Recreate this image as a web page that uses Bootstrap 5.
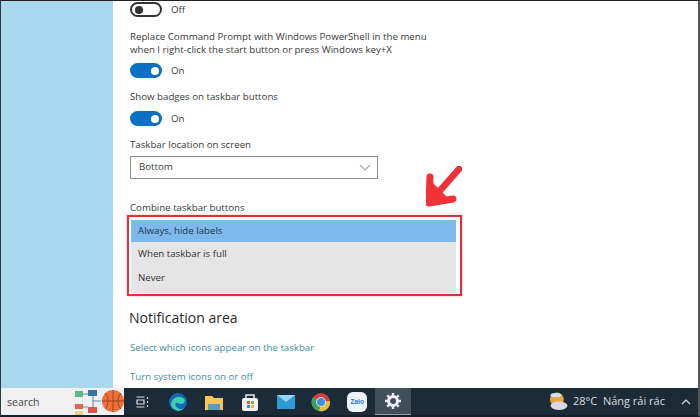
<!DOCTYPE html>
<html lang="en"><head><meta charset="utf-8"><title>Taskbar settings</title>
<link href="https://cdn.jsdelivr.net/npm/bootstrap@5.3.0/dist/css/bootstrap.min.css" rel="stylesheet">
<style>
html,body{margin:0;height:417px;overflow:hidden;background:#fff}
body{font-family:"Open Sans","Noto Sans",sans-serif;font-size:9.7px;color:#3a3a3a}
.shot{width:700px;height:417px;border-top:1px solid #222;border-left:1px solid #2a3a44;border-right:2px solid #555;border-bottom:2px solid #15202a;position:relative}
.upper{height:387px;overflow:hidden}
.side{width:112px;background:#a8d8ee;flex:none}
.pane{width:585px;padding-left:17px;position:relative;flex:none}
.tog{width:32px;height:15px;border-radius:8px;flex:none;display:flex;align-items:center;padding:0 3px}
.tog i{display:block;width:8px;height:8px;border-radius:50%}
.t-on{background:#0b6fc4;justify-content:flex-end}.t-on i{background:#fff}
.t-off{border:2px solid #333;background:#fff}.t-off i{background:#333}
.row-t{display:flex;align-items:center;gap:9px;line-height:15px}
.lbl{line-height:13px;margin:0}
.sel{width:248px;height:23px;border:1px solid #8b8b8b;padding:0 6px 0 8px;display:flex;align-items:center;justify-content:space-between;margin-top:5px}
.drop{width:325px;margin-top:6px;background:#e5e5e5;margin-left:1px;padding-bottom:2.5px}
.drop div{height:24px;padding:0 7px;display:flex;align-items:center;color:#333}
.drop .on{height:22px;background:#7db9ec;color:#1f3550}
.redbox{position:absolute;left:14px;top:214px;width:335px;height:81px;border:2px solid #d8343c;box-shadow:0 0 2px #f3a0a0}
.arrow{position:absolute;left:313px;top:165px}
.hd{font-size:14px;line-height:20px;color:#2b2b2b;margin:15px 0 0 -1px}
.lnk{line-height:13px;color:#3f8ea8}
.bar{height:27px;background:#1c2b38}
.srch{width:123px;height:27px;background:#f0f0f0;font-size:10.500px;color:#444;padding:2px 0 0 6px;display:flex;align-items:center;flex:none;position:relative}
.ic{width:35.900px;height:27px;display:flex;align-items:center;justify-content:center;flex:none}
.ic.act{background:#3f4f5a;border-bottom:1px solid #8b9aa5}
.zalo{width:20px;height:20px;border-radius:6px;background:#eef3fa;color:#2f7de0;font-size:6.500px;font-weight:700;display:flex;align-items:center;justify-content:center}
.wx{color:#d6dde2;font-size:11px;white-space:nowrap}
.t1{margin-top:1px}.p1{margin-top:13px}.r2{margin-top:7px}.p2{margin-top:12px}.r3{margin-top:8px}.p3{margin-top:12px}
.p4{margin-top:22px}.l1{margin-top:13.500px}.l2{margin-top:16px}
.fav{position:absolute;left:72px;top:-1px}
.chev{margin:0 7px 0 16px}
</style></head><body>
<div class="shot d-flex flex-column">
<div class="upper d-flex">
<div class="side"></div>
<div class="pane">
<div class="row-t t1"><span class="tog t-off"><i></i></span><span>Off</span></div>
<p class="lbl p1">Replace Command Prompt with Windows PowerShell in the menu<br>when I right-click the start button or press Windows key+X</p>
<div class="row-t r2"><span class="tog t-on"><i></i></span><span>On</span></div>
<p class="lbl p2">Show badges on taskbar buttons</p>
<div class="row-t r3"><span class="tog t-on"><i></i></span><span>On</span></div>
<p class="lbl p3">Taskbar location on screen</p>
<div class="sel"><span>Bottom</span><svg width="12" height="7" viewBox="0 0 12 7"><path d="M1 1l5 5 5-5" fill="none" stroke="#aaa" stroke-width="1.200"/></svg></div>
<p class="lbl p4">Combine taskbar buttons</p>
<div class="drop"><div class="on">Always, hide labels</div><div>When taskbar is full</div><div>Never</div></div>
<h2 class="hd">Notification area</h2>
<div class="lnk l1">Select which icons appear on the taskbar</div>
<div class="lnk l2">Turn system icons on or off</div>
<div class="redbox"></div>
<svg class="arrow" width="36" height="42" viewBox="0 0 36 42"><path d="M33 3L11 28" stroke="#ee3237" stroke-width="6.500" stroke-linecap="round"/><path d="M4 11L3 37l24-4" fill="none" stroke="#ee3237" stroke-width="7" stroke-linecap="round" stroke-linejoin="round"/><path d="M4 14v20h20z" fill="#ee3237"/></svg>
</div>
</div>
<div class="bar d-flex align-items-center">
<div class="srch">search
<svg class="fav" width="58" height="29" viewBox="0 0 58 29"><rect x="2" y="4" width="8" height="6" fill="#5db98a"/><rect x="15" y="3" width="9" height="6" fill="#2f78a8"/><rect x="2" y="17" width="8" height="5" fill="#d86a55"/><rect x="2" y="24" width="8" height="4" fill="#e8cf8a"/><rect x="15" y="20" width="9" height="6" fill="#d8564a"/><path d="M10 7h5M10 20h5M20 14h8M20 9v11" stroke="#5a8aa0" fill="none"/><circle cx="40" cy="14" r="11" fill="#e8703a"/><path d="M40 3v22M29 14h22M32 6c4 4 4 12 0 16M48 6c-4 4-4 12 0 16" fill="none" stroke="#a8401c" stroke-width="1"/></svg>
</div>
<div class="ic"><svg width="14" height="14" viewBox="0 0 14 14"><path d="M1.500 2h8M1.500 12h8M2 5h7v4H2zM12.500 2v2M12.500 6v2M12.500 10v2" fill="none" stroke="#d8dde0" stroke-width="1.200"/></svg></div>
<div class="ic"><svg width="20" height="20" viewBox="0 0 20 20"><circle cx="10" cy="10" r="9" fill="#0f6ab8"/><path d="M3 12c1-6 7-9 12-6 3 2 2 6-2 6-3 0-3-2-5-1-2 1 0 5 4 6 2 0 3 0 4-1-2 3-7 4-10 1-2-1-3-3-3-5z" fill="#3fcfb0"/></svg></div>
<div class="ic"><svg width="18" height="16" viewBox="0 0 18 16"><path d="M0 2h7l2 2h9v12H0z" fill="#f6c94e"/><path d="M3 10h12v6H3z" fill="#5e9db8"/></svg></div>
<div class="ic"><svg width="18" height="20" viewBox="0 0 18 20"><path d="M5 6V3h8v3" fill="none" stroke="#e8e8e8" stroke-width="1.500"/><rect x="1" y="6" width="16" height="13" rx="2" fill="#f1f1f1"/><rect x="6" y="9" width="3" height="3" fill="#d9633a"/><rect x="10" y="9" width="3" height="3" fill="#7fb53b"/><rect x="6" y="13" width="3" height="3" fill="#3a8bd0"/><rect x="10" y="13" width="3" height="3" fill="#e6b93a"/></svg></div>
<div class="ic"><svg width="18" height="14" viewBox="0 0 18 14"><rect width="18" height="14" fill="#2e9bd6"/><path d="M0 0l9 7 9-7z" fill="#9ad6f2"/></svg></div>
<div class="ic"><svg width="20" height="20" viewBox="0 0 20 20"><circle cx="10" cy="10" r="9" fill="#d8403a"/><path d="M10 10L2 5a9 9 0 0 0 6 14z" fill="#3fa45a"/><path d="M10 10l9-1a9 9 0 0 1-11 10z" fill="#e8c13a"/><circle cx="10" cy="10" r="4.500" fill="#3f8fdc" stroke="#e8e8e8"/></svg></div>
<div class="ic"><span class="zalo">Zalo</span></div>
<div class="ic act"><svg width="16" height="16" viewBox="0 0 16 16"><circle cx="8" cy="8" r="4.500" fill="none" stroke="#eef" stroke-width="3"/><path d="M8 0v3M8 13v3M0 8h3M13 8h3M2.300 2.300l2 2M11.700 11.700l2 2M2.300 13.700l2-2M11.700 4.300l2-2" stroke="#eef" stroke-width="2.400"/></svg></div>
<div class="flex-grow-1"></div>
<svg width="20" height="19" viewBox="0 0 18 18" class="me-1"><circle cx="7" cy="7" r="6.500" fill="#eaa63c"/><ellipse cx="9" cy="13" rx="8" ry="4" fill="#d9d4e8"/><ellipse cx="6" cy="3" rx="5" ry="2" fill="#cfe0ee"/></svg>
<span class="wx">28°C&nbsp; Nắng rải rác</span>
<svg class="chev" width="10" height="6" viewBox="0 0 10 6"><path d="M1 5l4-4 4 4" fill="none" stroke="#d6dde2" stroke-width="1.200"/></svg>
</div>
</div>
</body></html>
